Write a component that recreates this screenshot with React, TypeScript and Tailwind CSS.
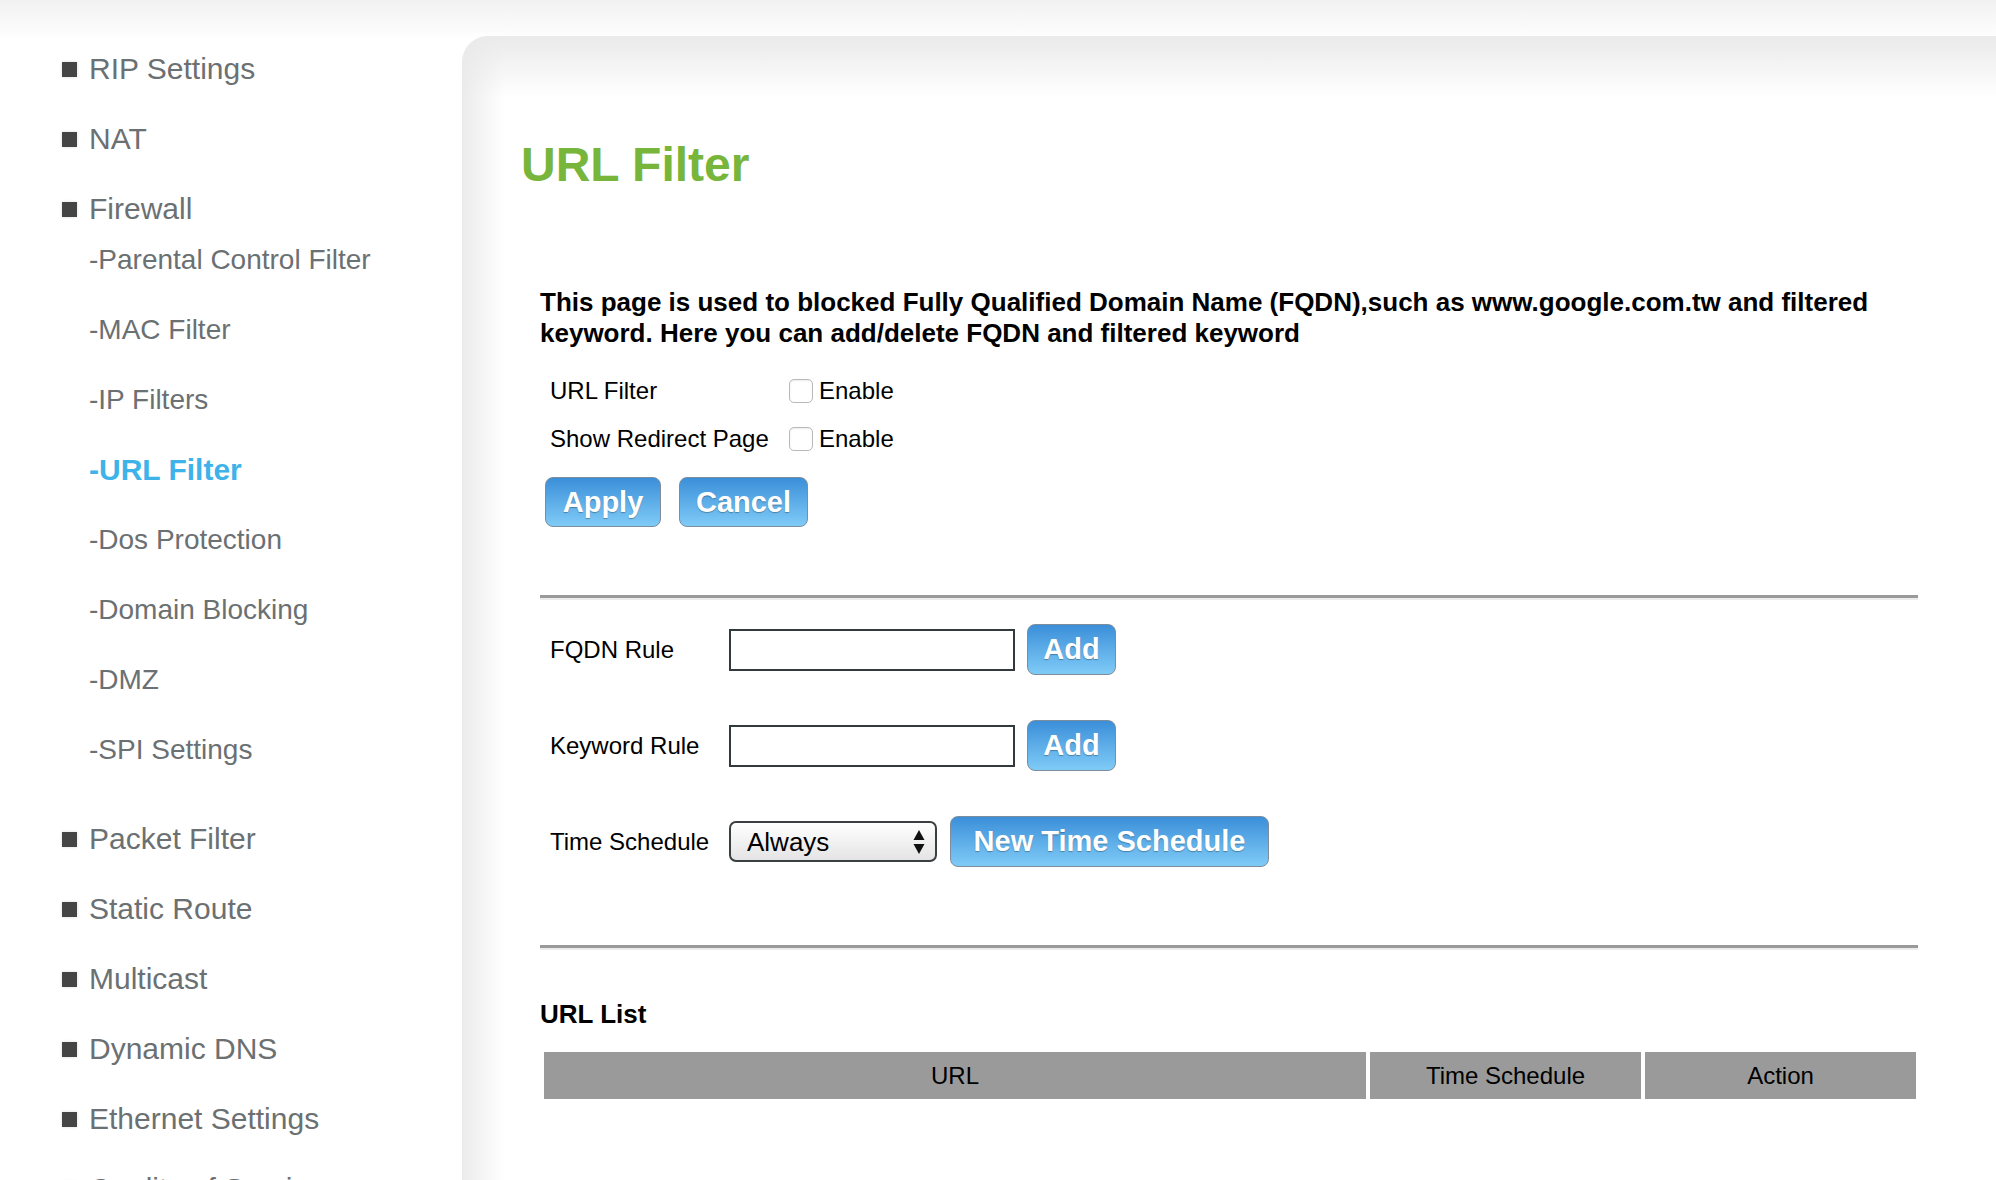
import React from "react";

const mainItems1 = ["RIP Settings", "NAT", "Firewall"];
const subItems = [
  "-Parental Control Filter",
  "-MAC Filter",
  "-IP Filters",
  "-URL Filter",
  "-Dos Protection",
  "-Domain Blocking",
  "-DMZ",
  "-SPI Settings",
];
const mainItems2 = [
  "Packet Filter",
  "Static Route",
  "Multicast",
  "Dynamic DNS",
  "Ethernet Settings",
  "Quality of Service",
];

const MainItem = ({ label }: { label: string }) => (
  <div className="flex h-[70px] shrink-0 items-center">
    <span className="ml-[62px] mr-[12px] h-[15px] w-[15px] bg-[#444] shadow-[0_0_3px_rgba(0,0,0,0.15)]" />
    <span className="text-[30px] leading-none text-[#6b7072]">{label}</span>
  </div>
);

const SubItem = ({ label }: { label: string }) => {
  const active = label === "-URL Filter";
  return (
    <div className="flex h-[70px] shrink-0 items-center pl-[89px]">
      {active ? (
        <span className="text-[30px] font-bold leading-none text-[#3db3ea]">{label}</span>
      ) : (
        <span className="text-[28px] leading-none text-[#6b7072]">{label}</span>
      )}
    </div>
  );
};

const BlueButton = ({ label, className }: { label: string; className: string }) => (
  <button
    className={
      "flex items-center justify-center rounded-[8px] border border-[#7d8d9b] bg-[linear-gradient(to_bottom,#3b8fd9,#7fcbf7)] text-[29px] font-bold leading-none text-white [text-shadow:0_1px_1px_rgba(0,0,0,0.3)] " +
      className
    }
  >
    {label}
  </button>
);

const Checkbox = () => (
  <span className="h-[24px] w-[24px] rounded-[5px] border border-[#b9b9b9] bg-white shadow-[inset_0_1px_2px_rgba(0,0,0,0.08)]" />
);

const Divider = () => (
  <div className="w-full">
    <div className="h-[3px] bg-[#9a9a9a]" />
    <div className="h-[2px] bg-[#ececec]" />
  </div>
);

export default function App() {
  return (
    <div className="h-[1180px] w-full overflow-hidden bg-[linear-gradient(to_bottom,#f1f1f1_0px,#ffffff_40px)] font-['Liberation_Sans',Arial,sans-serif]">
      <div className="flex pt-[34px]">
        {/* sidebar */}
        <div className="flex w-[462px] shrink-0 flex-col">
          {mainItems1.map((m) => (
            <MainItem key={m} label={m} />
          ))}
          <div className="mt-[-19px] flex flex-col">
            {subItems.map((s) => (
              <SubItem key={s} label={s} />
            ))}
          </div>
          <div className="mt-[19px] flex flex-col">
            {mainItems2.map((m) => (
              <MainItem key={m} label={m} />
            ))}
          </div>
        </div>

        {/* content panel */}
        <div className="mt-[2px] h-[1200px] flex-1 rounded-tl-[26px] bg-[linear-gradient(to_bottom,rgba(234,234,234,1)_0px,rgba(255,255,255,0)_62px),linear-gradient(to_right,#ebebeb_0px,#ffffff_42px)] pl-[59px] pt-[101px]">
          <h1 className="text-[48px] font-bold leading-[56px] text-[#77b53b]">URL Filter</h1>

          <div className="ml-[19px] w-[1378px]">
            <p className="mt-[94px] text-[26px] font-bold leading-[31px] text-black">
              This page is used to blocked Fully Qualified Domain Name (FQDN),such as www.google.com.tw and filtered
              <br />
              keyword. Here you can add/delete FQDN and filtered keyword
            </p>

            <div className="mt-[18px] flex flex-col pl-[10px] text-[24px] text-black">
              <div className="flex h-[48px] items-center">
                <span className="w-[239px]">URL Filter</span>
                <Checkbox />
                <span className="ml-[6px]">Enable</span>
              </div>
              <div className="flex h-[48px] items-center">
                <span className="w-[239px]">Show Redirect Page</span>
                <Checkbox />
                <span className="ml-[6px]">Enable</span>
              </div>
            </div>

            <div className="ml-[5px] mt-[14px] flex gap-[18px]">
              <BlueButton label="Apply" className="h-[50px] w-[116px]" />
              <BlueButton label="Cancel" className="h-[50px] w-[129px]" />
            </div>

            <div className="mt-[68px]">
              <Divider />
            </div>

            <div className="mt-[24px] flex flex-col gap-[45px] pl-[10px] text-[24px] text-black">
              <div className="flex h-[51px] items-center">
                <span className="w-[179px]">FQDN Rule</span>
                <div className="h-[42px] w-[286px] border-2 border-[#333a3d] bg-white" />
                <BlueButton label="Add" className="ml-[12px] h-[51px] w-[89px]" />
              </div>
              <div className="flex h-[51px] items-center">
                <span className="w-[179px]">Keyword Rule</span>
                <div className="h-[42px] w-[286px] border-2 border-[#333a3d] bg-white" />
                <BlueButton label="Add" className="ml-[12px] h-[51px] w-[89px]" />
              </div>
              <div className="flex h-[51px] items-center">
                <span className="w-[179px]">Time Schedule</span>
                <div className="flex h-[41px] w-[208px] items-center justify-between rounded-[7px] border-2 border-[#3a3f42] bg-[linear-gradient(to_bottom,#ffffff,#e4e4e4)] pl-[16px] pr-[10px]">
                  <span className="text-[26px] leading-none">Always</span>
                  <svg width="12" height="26" viewBox="0 0 12 26">
                    <path d="M6 1 L11.5 11 L0.5 11 Z" fill="#111" />
                    <path d="M6 25 L11.5 15 L0.5 15 Z" fill="#111" />
                  </svg>
                </div>
                <BlueButton label="New Time Schedule" className="ml-[13px] h-[51px] w-[319px]" />
              </div>
            </div>

            <div className="mt-[78px]">
              <Divider />
            </div>

            <h2 className="mt-[49px] text-[26px] font-bold leading-[30px] text-black">URL List</h2>

            <div className="ml-[4px] mt-[23px] flex h-[47px] w-[1372px] gap-[4px] text-[24px] text-black">
              <div className="flex w-[822px] items-center justify-center bg-[#9a9a9a]">URL</div>
              <div className="flex w-[271px] items-center justify-center bg-[#9a9a9a]">Time Schedule</div>
              <div className="flex flex-1 items-center justify-center bg-[#9a9a9a]">Action</div>
            </div>
          </div>
        </div>
      </div>
    </div>
  );
}
